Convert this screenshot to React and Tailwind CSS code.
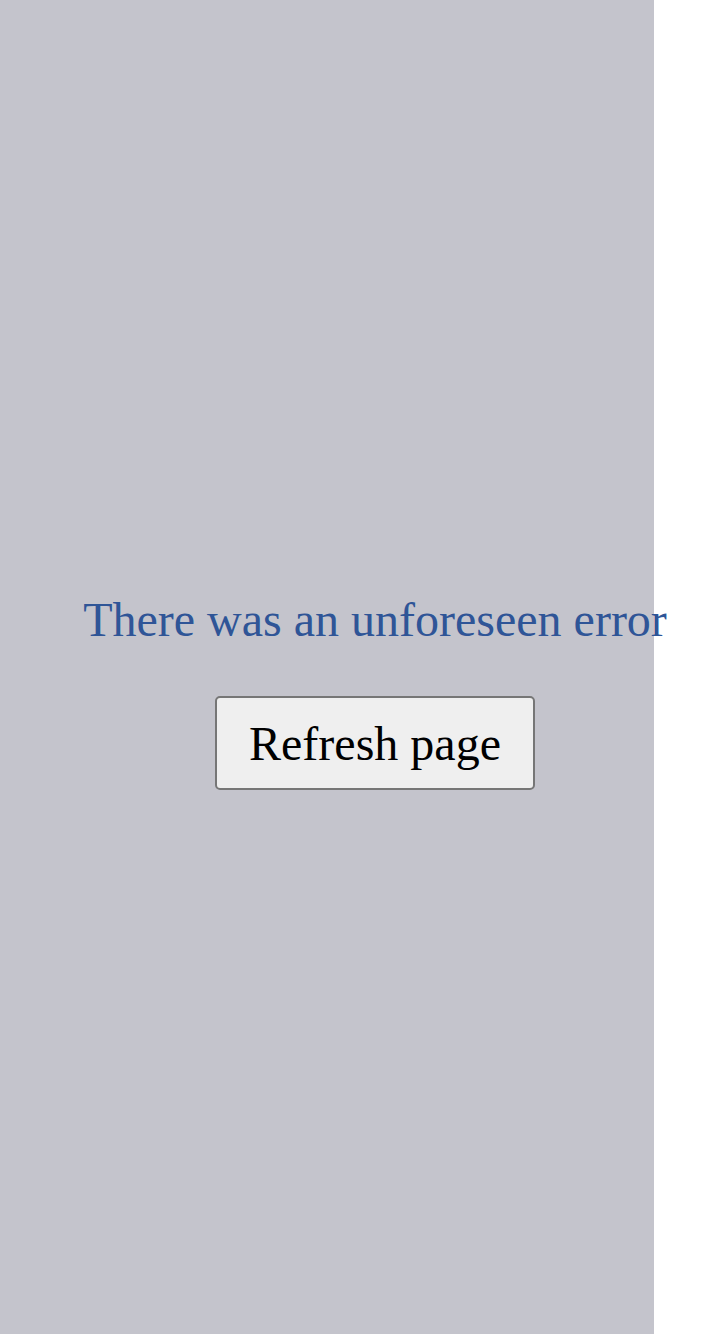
import React from 'react';

function App() {
  return (
    <div className="min-h-screen bg-white">
      <div className="w-[654px] h-[1334px] bg-[#c4c4cc] flex flex-col items-center justify-center pl-[96px] pt-[48px] font-['Liberation_Serif',serif]">
        <p className="whitespace-nowrap text-[48px] leading-[55px] text-[#2f5597]">There was an unforeseen error</p>
        <button
          className="mt-[49px] h-[94px] px-[32px] whitespace-nowrap text-[48px] leading-[55px] text-black bg-[#efefef] border-2 border-[#767676] rounded-[5px]"
          onClick={() => window.location.reload()}
        >
          Refresh page
        </button>
      </div>
    </div>
  );
}

export default App;
